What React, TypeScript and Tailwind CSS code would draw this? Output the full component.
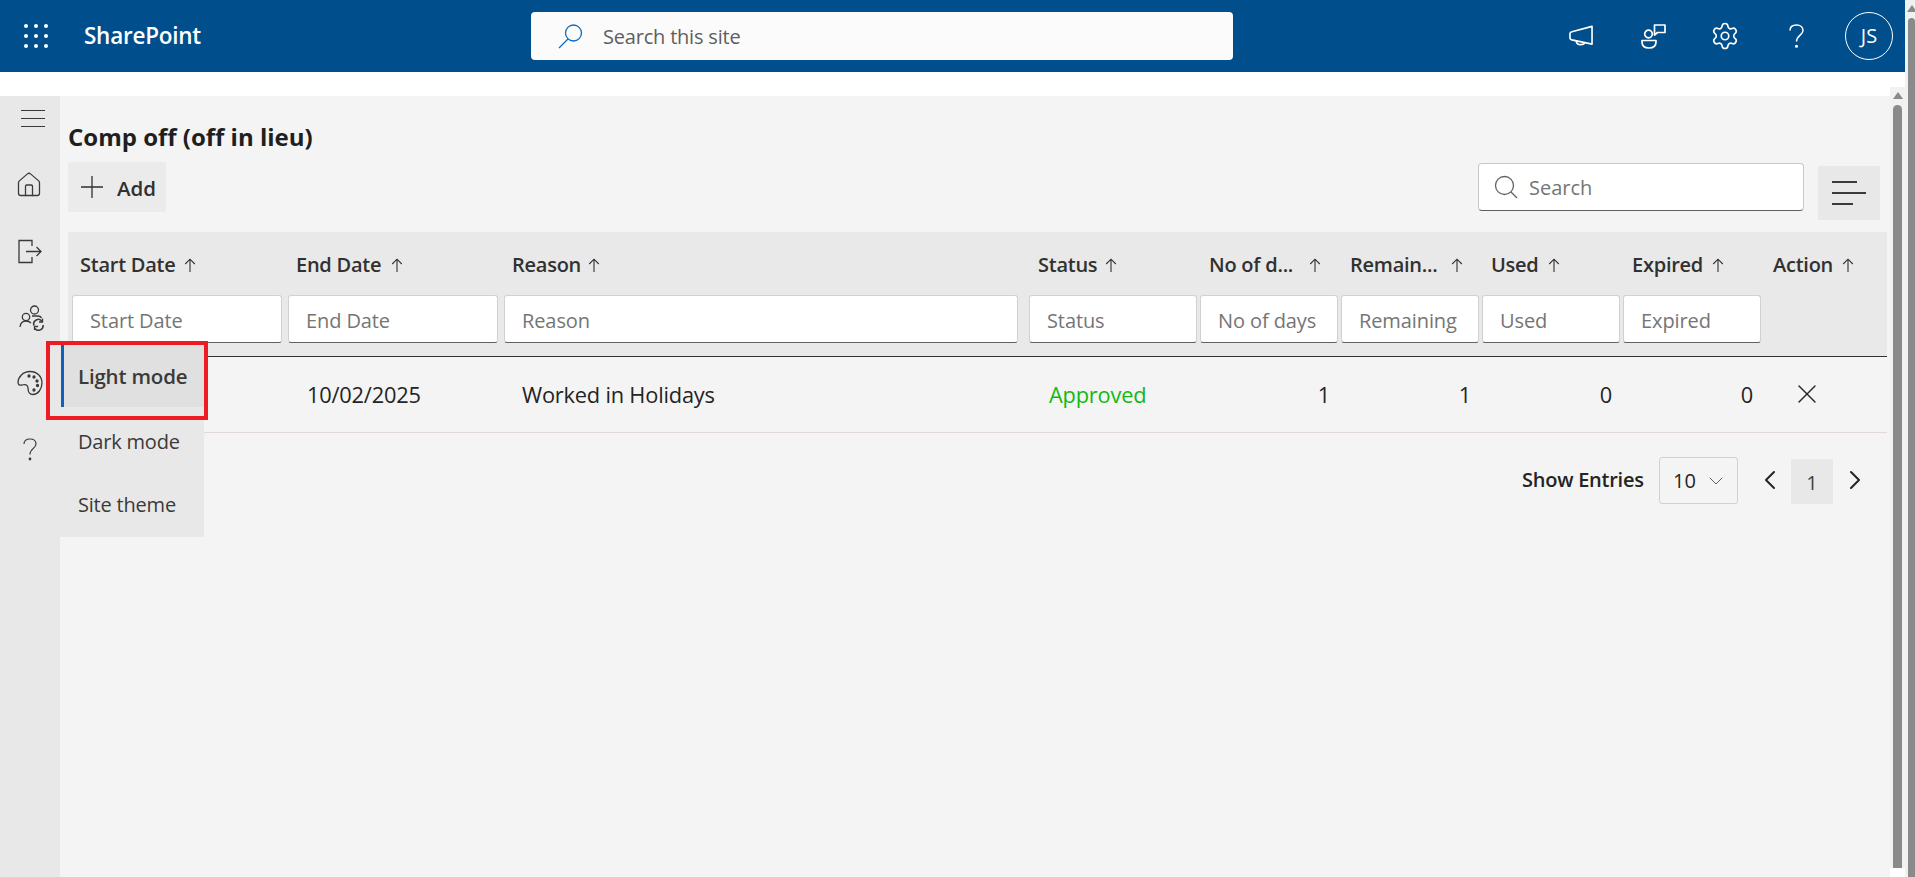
import { ChevronDown, ChevronLeft, ChevronRight, Home, Settings, X } from "lucide-react";

const columns = [
  { label: "Start Date", placeholder: "Start Date", input: "w-[210px]", gap: "ml-[9px]", pad: "pl-[8px]" },
  { label: "End Date", placeholder: "End Date", input: "w-[210px]", gap: "ml-[10px]", pad: "pl-[8px]" },
  { label: "Reason", placeholder: "Reason", input: "w-[514px]", gap: "ml-[7px]", pad: "pl-[8px]" },
  { label: "Status", placeholder: "Status", input: "w-[168px]", gap: "ml-[8px]", pad: "pl-[9px]" },
  { label: "No of d...", placeholder: "No of days", input: "w-[138px]", gap: "ml-[16px]", pad: "pl-[9px]" },
  { label: "Remain...", placeholder: "Remaining", input: "w-[138px]", gap: "ml-[14px]", pad: "pl-[9px]" },
  { label: "Used", placeholder: "Used", input: "w-[138px]", gap: "ml-[9px]", pad: "pl-[9px]" },
  { label: "Expired", placeholder: "Expired", input: "w-[138px]", gap: "ml-[9px]", pad: "pl-[9px]" },
  { label: "Action", placeholder: "", input: "", gap: "ml-[9px]", pad: "pl-[9px]" },
];

const gridCols = "grid grid-cols-[216px_216px_525px_171px_141px_141px_141px_141px_1fr] pl-1";

const SortArrow = () => (
  <svg width="12" height="15" viewBox="0 0 12 15" fill="none" stroke="currentColor" strokeWidth="1.1">
    <path d="M6 14V1.5M1.2 6L6 1.2 10.8 6" />
  </svg>
);

const Scrollbar = ({ width, pad, arrowTop }: { width: string; pad: string; arrowTop: string }) => (
  <div className={`${width} ${pad} h-full shrink-0 flex flex-col items-center bg-[#f1f1f1]`}>
    <div className={`${arrowTop} w-0 h-0 border-x-[5px] border-x-transparent border-b-[7px] border-b-[#8a8a8a]`} />
    <div className="mt-[6px] w-full flex-1 rounded-t-full bg-[#8a8a8a]" />
  </div>
);

const TopBar = () => (
  <header className="h-[72px] shrink-0 bg-[#004e8c] flex items-center text-white">
    <div className="ml-[24px] w-[24px] grid grid-cols-3 gap-[6px]">
      {[0, 1, 2, 3, 4, 5, 6, 7, 8].map((i) => (
        <span key={i} className="size-[4px] rounded-full bg-white" />
      ))}
    </div>
    <span className="ml-[36px] w-[447px] text-[22.5px] font-semibold tracking-[-0.25px]">SharePoint</span>
    <div className="w-[702px] h-[48px] rounded-[4px] bg-[#fbfbfb] flex items-center pl-[27px]">
      <svg width="25" height="25" viewBox="0 0 25 25" fill="none" stroke="#0f6cbd" strokeWidth="1.3">
        <circle cx="15.5" cy="9" r="8" />
        <path d="M10 15L1 24" />
      </svg>
      <span className="ml-[20px] pt-px text-[20px] text-[#605e5c] tracking-[-0.2px]">Search this site</span>
    </div>
    <div className="ml-[336px] w-[24px] flex justify-center">
      <svg width="25" height="22" viewBox="0 0 25 22" fill="none" stroke="white" strokeWidth="1.7" strokeLinejoin="round">
        <path d="M24 1.5V20L3 15.5Q1 15 1 13.5V9Q1 7.5 3 7L24 1.5Z" transform="translate(0 -0.5)" />
        <path d="M7.5 16Q8 20 12 20T16 18" />
      </svg>
    </div>
    <div className="ml-[48px] w-[24px]">
      <svg width="25" height="25" viewBox="0 0 25 25" fill="none" stroke="white" strokeWidth="1.7" strokeLinejoin="round">
        <circle cx="7.5" cy="10" r="3.8" />
        <path d="M1 16.5H15V18Q15 24 8 24T1 18V16.5Z" />
        <path d="M13.5 1H24V8.5H16.5L13.5 11V1Z" />
      </svg>
    </div>
    <div className="ml-[48px] w-[24px]">
      <Settings size={30} strokeWidth={1.3} className="-ml-[3px]" />
    </div>
    <div className="ml-[52px] w-[14px]">
      <svg width="15" height="24" viewBox="0 0 15 24" fill="none" stroke="white" strokeWidth="1.5">
        <path d="M1 6.5C1 3 3.5 1 7.5 1S14 3.3 14 6.5C14 11 7.5 11.5 7.5 17.5" />
        <circle cx="7.5" cy="22.3" r="0.8" fill="white" />
      </svg>
    </div>
    <div className="ml-[42px] size-[48px] rounded-full border border-white flex items-center justify-center text-[20px]">JS</div>
  </header>
);

const SideNav = () => (
  <nav className="w-[60px] shrink-0 h-full bg-[#e8e8e8] text-[#3b3a39]">
    <div className="ml-[21px] mt-[14px] w-[24px] flex flex-col gap-[7px]">
      <span className="h-px bg-[#3b3a39]" />
      <span className="h-px bg-[#3b3a39]" />
      <span className="h-px bg-[#3b3a39]" />
    </div>
    <Home size={28} strokeWidth={1.1} className="ml-[15px] mt-[44px]" />
    <svg className="ml-[17px] mt-[40px]" width="25" height="25" viewBox="0 0 25 25" fill="none" stroke="currentColor" strokeWidth="1.3">
      <path d="M15 7V1.5H2V23.5H15V18" />
      <path d="M9 12.5H24M19.5 8L24 12.5 19.5 17" />
    </svg>
    <svg className="ml-[19px] mt-[41px]" width="26" height="26" viewBox="0 0 26 26" fill="none" stroke="currentColor" strokeWidth="1.3">
      <circle cx="15.5" cy="5" r="4" />
      <circle cx="7" cy="12" r="3.7" />
      <path d="M1 22C1.5 18 4 16 7 16S11 17 12 18" />
      <path d="M13 11H19C21 11 22 12 22.5 13" />
      <path d="M15 20.5A4.5 4.5 0 0 1 23 16.5M24 20A4.5 4.5 0 0 1 16 23.5" strokeWidth="1.6" />
      <path d="M23.5 13.5V17H20M15.5 25V21.5H19" strokeWidth="1.3" />
    </svg>
    <svg className="ml-[17px] mt-[39px]" width="26" height="26" viewBox="0 0 26 26" fill="none" stroke="currentColor" strokeWidth="1.3">
      <path d="M13 1.5C6 1.5 1 7 1 12.5 1 15 3 15.5 5 15 8 14 11 14.5 11 18 11 22 13 24.5 16 24.5 21 24.5 25 19 25 13 25 6.5 20 1.5 13 1.5Z" />
      <circle cx="12" cy="6" r="1" fill="currentColor" />
      <circle cx="17" cy="7" r="1" fill="currentColor" />
      <circle cx="20" cy="11" r="1" fill="currentColor" />
      <circle cx="20.5" cy="15.5" r="1" fill="currentColor" />
      <circle cx="17" cy="20" r="1" fill="currentColor" />
    </svg>
    <svg className="ml-[23px] mt-[42px]" width="14" height="23" viewBox="0 0 14 23" fill="none" stroke="currentColor" strokeWidth="1.2">
      <path d="M1 6C1 3 3 1 7 1S13 3 13 6C13 10.5 7 10.5 7 16.5" />
      <circle cx="7" cy="21" r="0.8" fill="currentColor" />
    </svg>
  </nav>
);

const ThemeMenu = () => (
  <>
    <div className="absolute left-[60px] top-[249px] w-[144px] h-[192px] bg-[#e8e8e8] text-[20px] text-[#3b3a39] flex flex-col">
      <div className="h-[62px] bg-[#e0e0e0] border-l-[3px] border-[#0f62b8] ml-px pl-[14px] pt-px flex items-center text-[20.5px] font-semibold tracking-[-0.2px]">Light mode</div>
      <div className="h-[63px] mt-[3px] pl-[18px] flex items-center tracking-[-0.2px]">Dark mode</div>
      <div className="h-[64px] pl-[18px] flex items-center tracking-[-0.2px]">Site theme</div>
    </div>
    <div className="absolute left-[46px] top-[245px] w-[162px] h-[79px] border-[4.5px] border-[#ed1c24]" />
  </>
);

const DataTable = () => (
  <div className="mt-[12px]">
    <div className="h-[125px] bg-[#e9e9e9] border-b border-[#323130]">
      <div className={`${gridCols} pt-[21px] h-[63px]`}>
        {columns.map((c) => (
          <div key={c.label} className={`${c.pad} h-[24px] flex items-center text-[20px] font-semibold text-[#323130] tracking-[-0.25px]`}>
            <span>{c.label}</span>
            <span className={`${c.gap} flex text-[#323130]`}>
              <SortArrow />
            </span>
          </div>
        ))}
      </div>
      <div className={gridCols}>
        {columns.map((c) =>
          c.placeholder ? (
            <input
              key={c.label}
              readOnly
              placeholder={c.placeholder}
              className={`${c.input} h-[48px] bg-white rounded-[3px] border border-[#d1d1d1] border-b-[#616161] pl-[17px] pt-[2px] text-[20px] tracking-[-0.1px] placeholder:text-[#757575] outline-none`}
            />
          ) : (
            <div key={c.label} />
          )
        )}
      </div>
    </div>
    <div className={`${gridCols} h-[76px] pt-[2px] items-center border-b border-[#e0d8dc] text-[21.8px] text-[#242424] tracking-[-0.2px]`}>
      <div />
      <div className="pl-[19px]">10/02/2025</div>
      <div className="pl-[18px]">Worked in Holidays</div>
      <div className="pl-[20px] text-[#13b913]">Approved</div>
      <div className="pr-[11px] text-right">1</div>
      <div className="pr-[11px] text-right">1</div>
      <div className="pr-[11px] text-right">0</div>
      <div className="pr-[11px] text-right">0</div>
      <div className="pl-[27px] -mt-[4px]">
        <X size={32} strokeWidth={1} />
      </div>
    </div>
  </div>
);

const Pagination = () => (
  <div className="mt-[24px] flex items-start text-[#242424]">
    <span className="ml-[1454px] mt-[8px] w-[137px] text-[20px] font-semibold tracking-[-0.25px]">Show Entries</span>
    <div className="w-[79px] h-[47px] rounded-[3px] border border-[#d1d1d1] flex items-center pl-[13px] pt-px text-[20px]">
      10
      <ChevronDown size={24} strokeWidth={1} className="ml-[8px] text-[#616161]" />
    </div>
    <ChevronLeft size={32} strokeWidth={1.5} className="ml-[16px] mt-[7px]" />
    <div className="ml-[5px] mt-[2px] w-[42px] h-[45px] pt-[3px] bg-[#e8e8e8] flex items-center justify-center text-[20px] text-[#424242]">1</div>
    <ChevronRight size={32} strokeWidth={1.5} className="ml-[6px] mt-[7px]" />
  </div>
);

export default function App() {
  return (
    <div className="h-screen overflow-hidden flex bg-white font-['Open_Sans','Noto_Sans',sans-serif]">
      <div className="flex-1 min-w-0 flex flex-col">
        <TopBar />
        <div className="relative flex-1 min-h-0 mt-[24px] flex">
          <SideNav />
          <main className="flex-1 min-w-0 h-full bg-[#f4f4f4] pl-[8px] pr-[3px]">
            <h1 className="pt-[25px] h-[57px] text-[24px] leading-[32px] font-bold text-[#201f1e]">Comp off (off in lieu)</h1>
            <div className="mt-[9px] h-[58px] flex items-start">
              <button className="w-[98px] h-[50px] rounded-[2px] bg-[#ebebeb] flex items-center pl-[13px] text-[20.5px] font-semibold text-[#323130]">
                <svg width="22" height="22" viewBox="0 0 22 22" fill="none" stroke="currentColor" strokeWidth="1.3">
                  <path d="M11 0V22M0 11H22" />
                </svg>
                <span className="ml-[14px] pt-[3px]">Add</span>
              </button>
              <div className="ml-auto mt-px w-[326px] h-[48px] rounded-[4px] bg-white border border-[#c8c8c8] border-b-[#616161] flex items-center pl-[15px]">
                <svg width="24" height="24" viewBox="0 0 24 24" fill="none" stroke="#616161" strokeWidth="1.3">
                  <circle cx="10.5" cy="10.5" r="9" />
                  <path d="M17 17L23 23" />
                </svg>
                <span className="ml-[11px] pt-[2px] text-[20px] text-[#757575]">Search</span>
              </div>
              <div className="ml-[14px] mr-[7px] mt-[4px] w-[62px] h-[54px] bg-[#e8e8e8] flex flex-col justify-center pl-[14px] gap-[9px]">
                <span className="block h-[2px] w-[25px] bg-[#3b3a39]" />
                <span className="block h-[2px] w-[34px] bg-[#3b3a39]" />
                <span className="block h-[2px] w-[21px] bg-[#3b3a39]" />
              </div>
            </div>
            <DataTable />
            <Pagination />
          </main>
          <Scrollbar width="w-[15px]" pad="px-[3px] -mt-[9px]" arrowTop="mt-[5px]" />
          <ThemeMenu />
        </div>
      </div>
      <Scrollbar width="w-[10px]" pad="pl-[3px]" arrowTop="mt-[5px]" />
    </div>
  );
}
